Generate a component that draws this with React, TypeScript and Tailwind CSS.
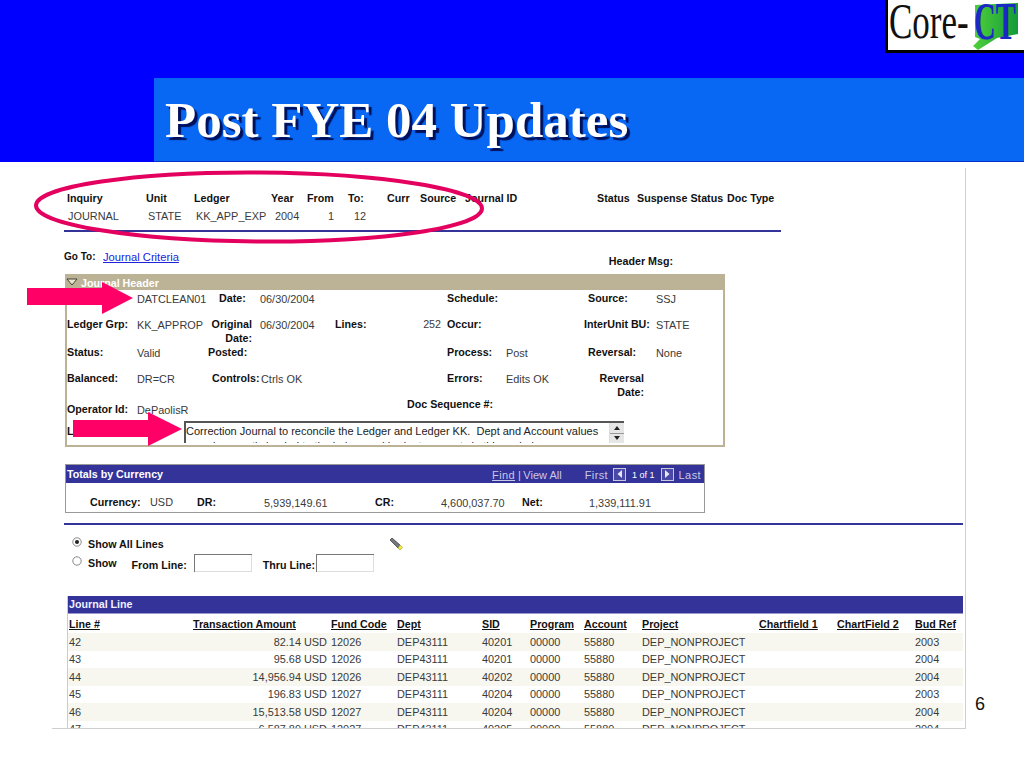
import type { ReactNode } from "react";

// column templates taken from the PeopleSoft page in the slide
const SUMMARY = "grid grid-cols-[79px_48px_77px_36px_41px_39px_33px_45px_132px_40px_90px_1fr]";
const HEADER = "grid grid-cols-[70px_75px_48px_75px_112px_59px_78px_72px_1fr]";
const TOTALS = "grid grid-cols-[60px_47px_67px_111px_66px_81px_67px_1fr]";
const LINES = "grid grid-cols-[124px_138px_66px_85px_48px_54px_58px_117px_78px_78px_1fr]";

const RULE = "h-[2px] bg-[#333399]";

const lines = [
  ["42", "82.14", "12026", "40201", "2003"],
  ["43", "95.68", "12026", "40201", "2004"],
  ["44", "14,956.94", "12026", "40202", "2004"],
  ["45", "196.83", "12027", "40204", "2003"],
  ["46", "15,513.58", "12027", "40204", "2004"],
  ["47", "6,587.89", "12027", "40205", "2004"],
];

function B({ children, className = "" }: { children?: ReactNode; className?: string }) {
  return <div className={`font-bold text-[10.7px] leading-[14px] text-[#111] ${className}`}>{children}</div>;
}

function V({ children, className = "" }: { children?: ReactNode; className?: string }) {
  return <div className={`text-[10.9px] leading-[14px] text-[#3a3a3a] ${className}`}>{children}</div>;
}

function Logo() {
  return (
    <div className="relative h-[53px] w-[139px] overflow-hidden border-b-[3px] border-l-[3px] border-black bg-white">
      <span className="absolute left-[1px] top-[-8px] origin-left scale-x-[0.7] font-['Liberation_Serif',serif] text-[50px] leading-[58px] text-[#111]">
        Core-
      </span>
      <svg viewBox="0 0 46 48" className="absolute left-[85px] top-[2px] h-[48px] w-[46px]">
        <defs>
          <linearGradient id="ct" x1="0" y1="0" x2="1" y2="0">
            <stop offset="0" stopColor="#4fd03a" />
            <stop offset="1" stopColor="#149a3a" />
          </linearGradient>
        </defs>
        <path d="M2 3 L45 1 L45 32 L24 36 L5 48 L0 44 L7 37 L2 35 Z" fill="url(#ct)" />
      </svg>
      <span className="absolute left-[86px] top-[-4px] origin-left scale-x-[0.58] font-['Liberation_Serif',serif] text-[52px] font-bold leading-[52px] text-[#1a28c4]">
        CT
      </span>
    </div>
  );
}

function Radio({ on }: { on?: boolean }) {
  return (
    <svg viewBox="0 0 10 10" className="mb-[4px] h-[10px] w-[10px]">
      <circle cx="5" cy="5" r="4.2" fill="#fff" stroke="#888" strokeWidth="1" />
      {on && <circle cx="5" cy="5" r="2" fill="#222" />}
    </svg>
  );
}

function Torch() {
  return (
    <svg viewBox="0 0 14 14" className="h-[14px] w-[14px]">
      <path d="M1 3 L3 1 L11 8 L9 11 Z" fill="#77777f" stroke="#333" strokeWidth="0.7" />
      <path d="M11 8 L9 11 L11 13 L13.5 10.5 Z" fill="#f4ec30" stroke="#8a8a20" strokeWidth="0.5" />
    </svg>
  );
}

function NavBtn({ dir }: { dir: "l" | "r" }) {
  return (
    <span className="flex h-[13px] w-[13px] items-center justify-center border border-[#c8c8dc] bg-[#4a4aa6]">
      <svg viewBox="0 0 8 8" className="h-[8px] w-[8px]">
        <path d={dir === "l" ? "M6 0 L1.5 4 L6 8 Z" : "M2 0 L6.5 4 L2 8 Z"} fill="#e8e8f4" />
      </svg>
    </span>
  );
}

function Spinner() {
  return (
    <div className="flex h-[20px] w-[15px] flex-col border-l border-[#ddd] bg-[#e6e6e6]">
      <div className="flex flex-1 items-center justify-center border-b border-[#999]">
        <svg viewBox="0 0 6 4" className="h-[4px] w-[6px]"><path d="M3 0 L6 4 L0 4 Z" fill="#222" /></svg>
      </div>
      <div className="flex flex-1 items-center justify-center">
        <svg viewBox="0 0 6 4" className="h-[4px] w-[6px]"><path d="M0 0 L6 0 L3 4 Z" fill="#222" /></svg>
      </div>
    </div>
  );
}

function Overlays() {
  return (
    <svg className="pointer-events-none absolute left-0 top-0 h-[768px] w-[1024px]" viewBox="0 0 1024 768">
      <ellipse cx="259" cy="207" rx="223" ry="34.5" fill="none" stroke="#e4005f" strokeWidth="4" transform="rotate(0.4 259 207)" />
      <path d="M27 288 H102 V282 L133 298 L102 314 V305 H27 Z" fill="#ff0066" />
      <path d="M73 420 H148 V412 L182 429 L148 446 V437 H73 Z" fill="#ff0066" />
    </svg>
  );
}

export default function App() {
  return (
    <div className="relative h-[768px] w-[1024px] overflow-hidden bg-white font-['Liberation_Sans',Arial,sans-serif]">
      <header className="flex h-[162px] flex-col bg-[#0000ff]">
        <div className="flex h-[78px] justify-end">
          <Logo />
        </div>
        <div className="ml-[154px] flex flex-1 items-center border-b border-[#0033cc] bg-[#0868f4] pl-[11px]">
          <h1 className="mt-[2px] font-['Liberation_Serif',serif] text-[51px] font-bold leading-none text-white [text-shadow:3px_3px_1px_#00105a]">
            Post FYE 04 Updates
          </h1>
        </div>
      </header>

      <div className="flex">
        <main className="ml-[52px] mt-[6px] h-[561px] w-[914px] overflow-hidden border-b border-r border-[#cfcfcf] pl-[12px]">
          <div className={`${SUMMARY} ml-[3px] mt-[23px]`}>
            <B>Inquiry</B><B>Unit</B><B>Ledger</B><B>Year</B><B>From</B><B>To:</B><B>Curr</B><B>Source</B>
            <B>Journal ID</B><B>Status</B><B>Suspense Status</B><B>Doc Type</B>
          </div>
          <div className={`${SUMMARY} ml-[4px] mt-[4px]`}>
            <V>JOURNAL</V><V className="ml-[1px]">STATE</V><V className="ml-[1px]">KK_APP_EXP</V><V className="ml-[3px]">2004</V>
            <V className="ml-[20px]">1</V><V className="ml-[5px]">12</V>
          </div>
          <div className={`${RULE} mt-[7px] w-[717px]`} />

          <div className="mt-[18px] flex h-[14px] w-[661px]">
            <div className="w-[39px] text-[10px] font-bold leading-[14px] text-[#111]">Go To:</div>
            <a className="text-[11.2px] leading-[14px] text-[#2222dd] underline">Journal Criteria</a>
            <B className="ml-auto mr-[52px] mt-[4px]">Header Msg:</B>
          </div>

          <section className="ml-[1px] mt-[10px] h-[173px] w-[660px] border-2 border-t-0 border-[#bcb396]">
            <div className="-mx-[2px] flex h-[16px] items-center bg-[#bcb396] pl-[1px]">
              <svg viewBox="0 0 12 8" className="mr-[3px] h-[8px] w-[12px]">
                <path d="M1 1 H11 L6 7 Z" fill="#e8e4c8" stroke="#222" strokeWidth="0.8" />
              </svg>
              <span className="mt-[2px] text-[10.7px] font-bold text-white">Journal Header</span>
            </div>

            <div className={`${HEADER} h-[27px] pt-[1px]`}>
              <B>Journal ID:</B><V className="mt-[1px]">DATCLEAN01</V><B className="ml-[7px]">Date:</B><V className="mt-[1px]">06/30/2004</V>
              <div /><B className="col-span-2">Schedule:</B><B className="ml-[4px]">Source:</B><V className="mt-[1px]">SSJ</V>
            </div>
            <div className={`${HEADER} h-[28px]`}>
              <B>Ledger Grp:</B><V className="mt-[1px]">KK_APPROP</V>
              <B className="-ml-[4px] mr-[8px] text-right">Original Date:</B><V className="mt-[1px]">06/30/2004</V>
              <B className="relative">Lines:<span className="absolute right-[6px] top-0 font-normal text-[#3a3a3a]">252</span></B>
              <B className="col-span-2">Occur:</B><B>InterUnit BU:</B><V className="mt-[1px]">STATE</V>
            </div>
            <div className={`${HEADER} h-[26px]`}>
              <B>Status:</B><V className="mt-[1px]">Valid</V><B className="-ml-[4px]">Posted:</B><div /><div />
              <B>Process:</B><V className="mt-[1px]">Post</V><B className="ml-[4px]">Reversal:</B><V className="mt-[1px]">None</V>
            </div>
            <div className={`${HEADER} h-[26px]`}>
              <B>Balanced:</B><V className="mt-[1px]">DR=CR</V>
              <B className="whitespace-nowrap">Controls:</B><V className="ml-[1px] mt-[1px]">Ctrls OK</V><div />
              <B>Errors:</B><V className="mt-[1px]">Edits OK</V>
              <B className="w-[60px] whitespace-nowrap text-right">Reversal<br />Date:</B>
            </div>
            <div className={`${HEADER} h-[24px]`}>
              <B className="whitespace-nowrap pt-[5px]">Operator Id:</B><V className="pt-[6px]">DePaolisR</V><div /><div />
              <B className="col-span-2 whitespace-nowrap pl-[72px]">Doc Sequence #:</B>
            </div>
            <div className="flex h-[22px]">
              <B className="w-[117px] shrink-0 overflow-hidden whitespace-nowrap pt-[3px]">Long Description:</B>
              <div className="flex h-[22px] w-[440px] overflow-hidden border-l-2 border-t-2 border-[#555] bg-white">
                <p className="flex-1 overflow-hidden pt-[1px] text-[11px] leading-[15px] text-[#222]">
                  Correction Journal to reconcile the Ledger and Ledger KK.&nbsp; Dept and Account values
                  <br />
                  were incorrectly loaded to the ledger and budget accounts in this period
                </p>
                <Spinner />
              </div>
            </div>
          </section>

          <section className="ml-[1px] mt-[17px] h-[49px] w-[640px] border border-[#999]">
            <div className="flex h-[18px] items-center bg-[#333399] pl-[1px] text-[11px] tracking-[0.4px] text-[#c9c9e6]">
              <span className="text-[10.7px] font-bold tracking-normal text-white">Totals by Currency</span>
              <span className="ml-auto mt-[2px] underline">Find</span>
              <span className="ml-[3px] mt-[2px]">|</span>
              <span className="ml-[2px] mt-[2px] tracking-normal">View All</span>
              <span className="ml-[23px] mt-[2px]">First</span>
              <span className="ml-[5px]"><NavBtn dir="l" /></span>
              <span className="ml-[6px] mt-[3px] text-[9px] tracking-normal text-white">1 of 1</span>
              <span className="ml-[6px]"><NavBtn dir="r" /></span>
              <span className="ml-[5px] mr-[3px] mt-[2px]">Last</span>
            </div>
            <div className={`${TOTALS} mt-[12px] pl-[24px]`}>
              <B>Currency:</B><V>USD</V><B>DR:</B><V className="mt-[1px]">5,939,149.61</V><B>CR:</B>
              <V className="mt-[1px]">4,600,037.70</V><B>Net:</B><V className="mt-[1px]">1,339,111.91</V>
            </div>
          </section>

          <div className={`${RULE} mt-[10px] w-[899px]`} />

          <div className="relative ml-[8px] mt-[12px] h-[59px] w-[340px]">
            <div className="flex items-center gap-[6px]">
              <Radio on /><B>Show All Lines</B>
            </div>
            <div className="mt-[3px] flex items-start">
              <div className="mt-[2px] flex items-center gap-[6px]"><Radio /><B>Show</B></div>
              <B className="ml-[15px] mt-[4px]">From Line:</B>
              <div className="ml-[7px] h-[18px] w-[58px] border-l border-t border-[#777] bg-white shadow-[inset_-1px_-1px_0_#ddd]" />
              <B className="ml-[11px] mt-[4px]">Thru Line:</B>
              <div className="ml-[1px] h-[18px] w-[58px] border-l border-t border-[#777] bg-white shadow-[inset_-1px_-1px_0_#ddd]" />
            </div>
            <div className="absolute left-[317px] top-0"><Torch /></div>
          </div>

          <section className="ml-[3px] w-[896px] border-l border-[#ccc]">
            <div className="flex h-[18px] items-center border-b border-[#9999cc] bg-[#333399] pl-[1px] text-[10.7px] font-bold text-[#f0f0ff]">
              Journal Line
            </div>
            <div className={`${LINES} h-[19px] items-center pl-[1px] [&>div]:underline`}>
              <B>Line #</B><B>Transaction Amount</B><B>Fund Code</B><B>Dept</B><B>SID</B><B>Program</B><B>Account</B><B>Project</B><B>Chartfield 1</B><B>ChartField 2</B><B>Bud Ref</B>
            </div>
            {lines.map(([no, amount, fund, sid, bud], i) => (
              <div key={no} className={`${LINES} h-[17.5px] items-center pl-[1px] ${i % 2 === 0 ? "bg-[#f7f7ef]" : "bg-white"}`}>
                <V>{no}</V>
                <V className="pr-[4px] text-right">{amount} USD</V>
                <V>{fund}</V>
                <V>DEP43111</V>
                <V>{sid}</V>
                <V>00000</V>
                <V>55880</V>
                <V>DEP_NONPROJECT</V>
                <div />
                <div />
                <V>{bud}</V>
              </div>
            ))}
          </section>
        </main>
        <div className="ml-[9px] mt-[531px] text-[18px] leading-[22px] text-[#111]">6</div>
      </div>

      <Overlays />
    </div>
  );
}
